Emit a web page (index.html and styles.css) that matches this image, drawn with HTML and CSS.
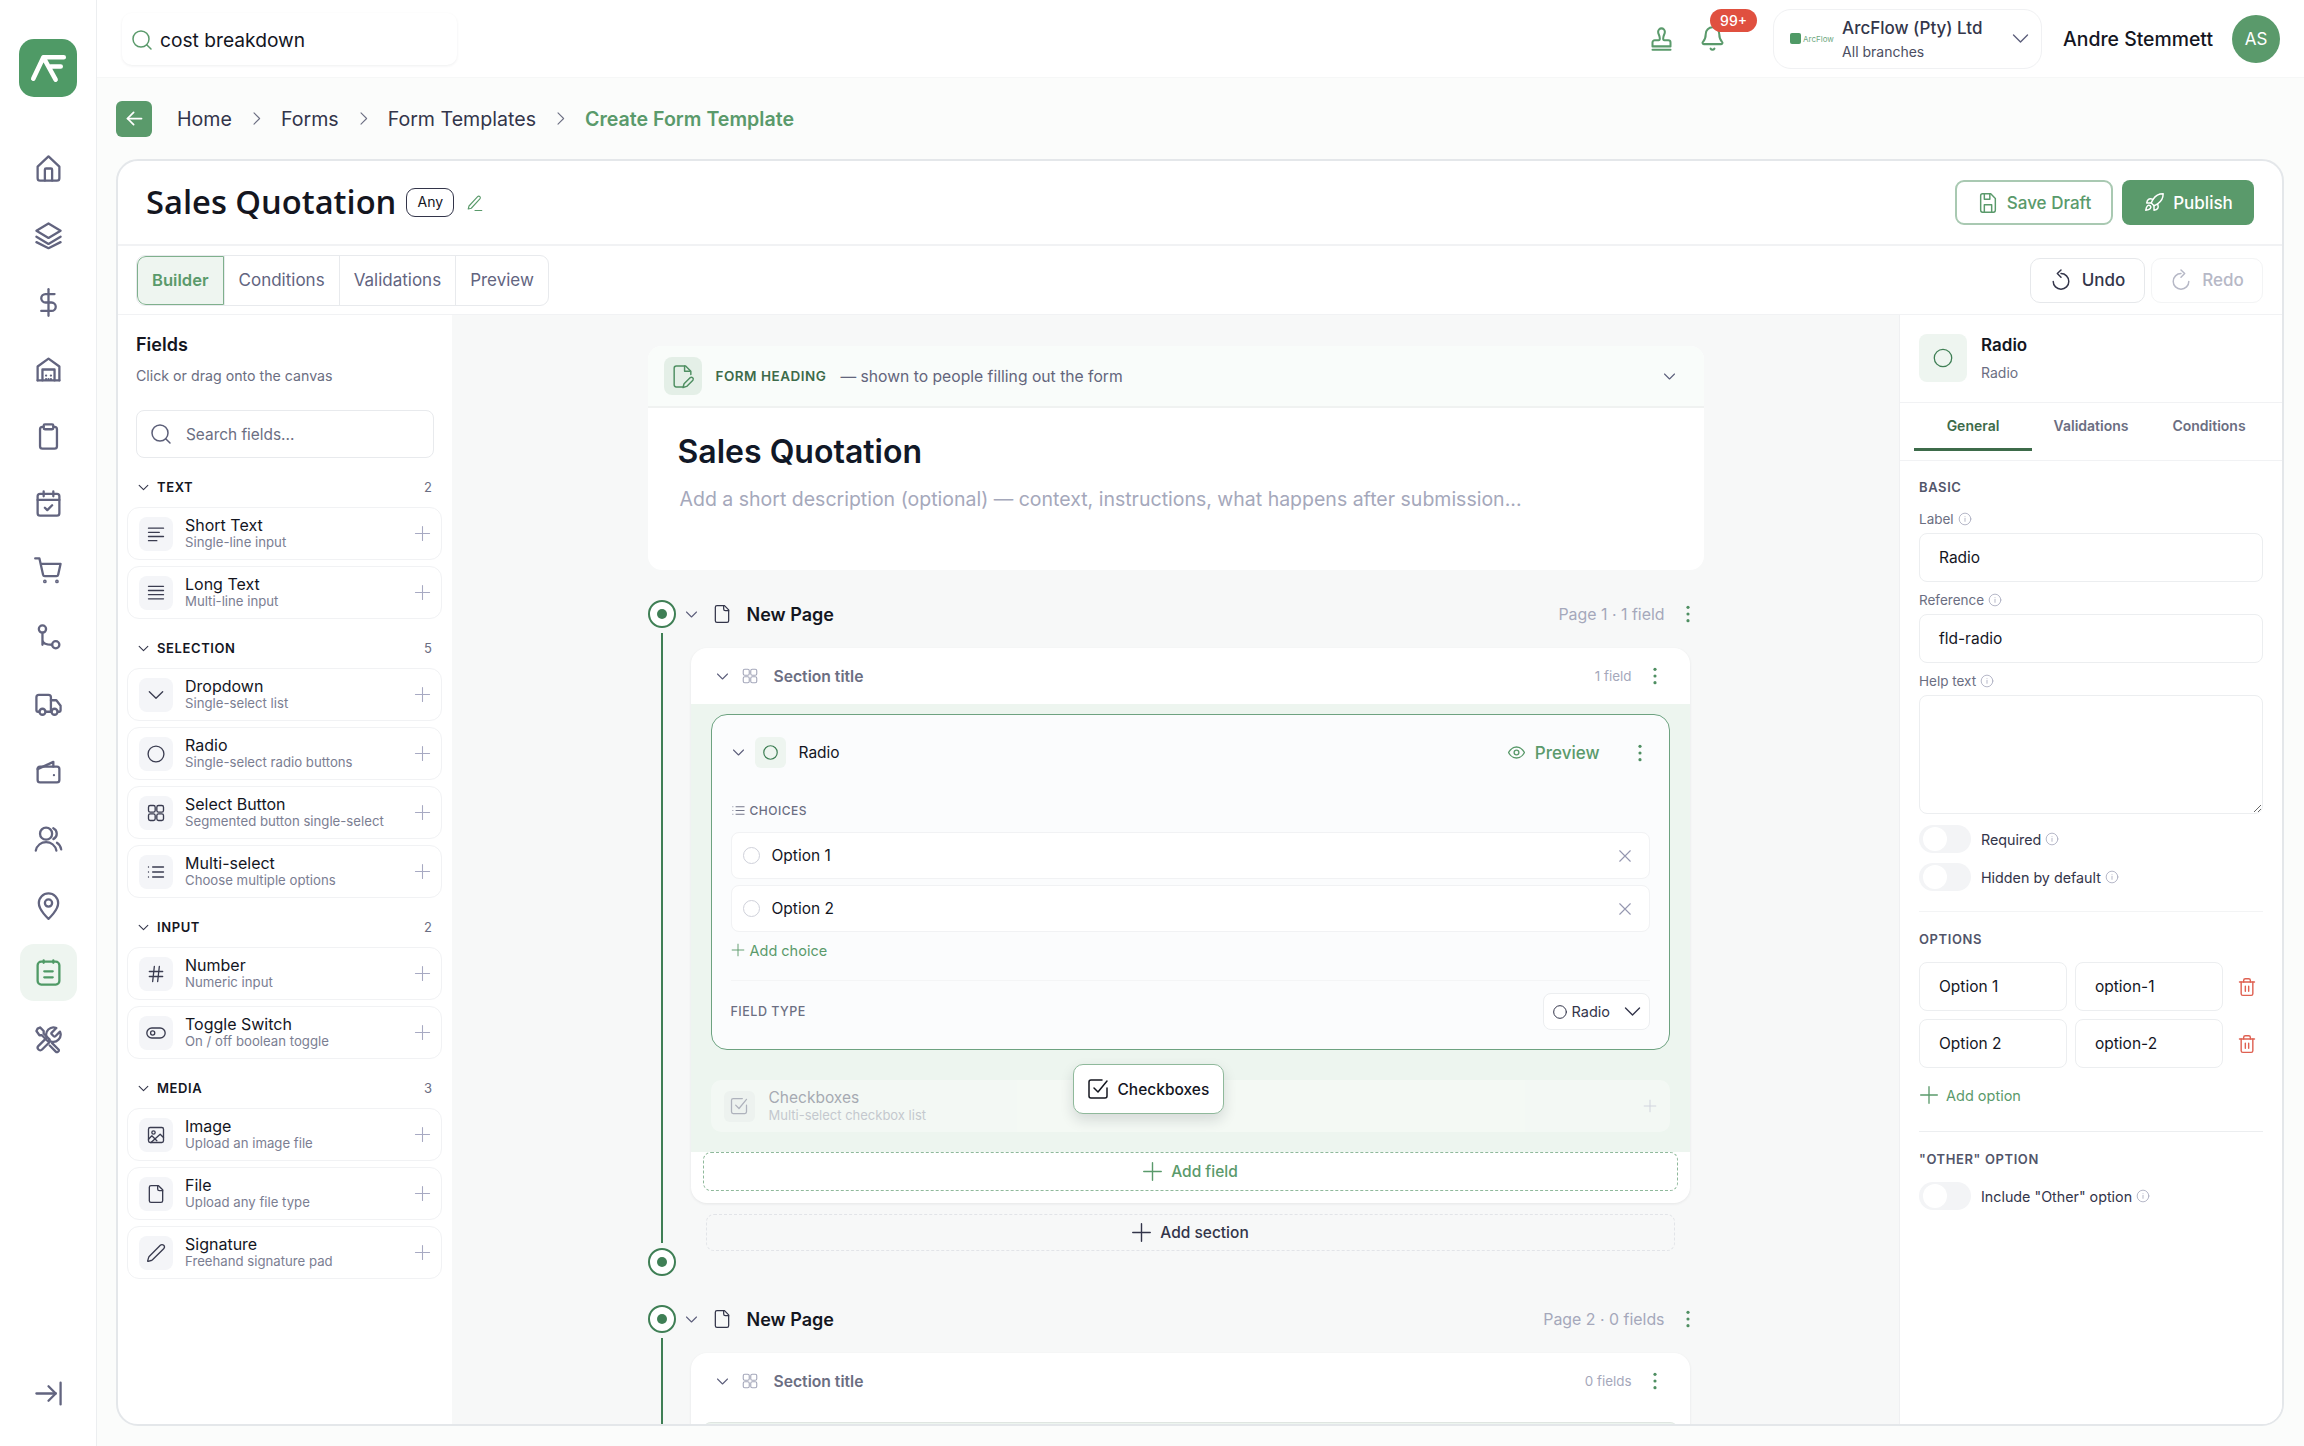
FILE: index.html
```html
<!DOCTYPE html>
<html lang="en">
<head>
    <meta charset="UTF-8">
    <meta name="viewport" content="width=device-width, initial-scale=1.0">
    <title>Create Form Template</title>
    <link rel="stylesheet" href="styles.css">
</head>
<body>
    <!-- Icon sprite -->
    <svg class="sprite" xmlns="http://www.w3.org/2000/svg">
        <symbol id="i-search" viewBox="0 0 24 24"><circle cx="11" cy="11" r="8"/><path d="m21 21-4.3-4.3"/></symbol>
        <symbol id="i-home" viewBox="0 0 24 24"><path d="M3 10.5 12 2l9 8.5V20a2 2 0 0 1-2 2H5a2 2 0 0 1-2-2z"/><path d="M9 22v-9a1 1 0 0 1 1-1h4a1 1 0 0 1 1 1v9"/></symbol>
        <symbol id="i-layers" viewBox="0 0 24 24"><path d="M12 2 2 8l10 6 10-6z"/><path d="m2 13 10 6 10-6"/><path d="m2 17.500 10 5 10-5"/></symbol>
        <symbol id="i-dollar" viewBox="0 0 24 24"><path d="M12 1v22"/><path d="M17 5H9.500a3.500 3.500 0 0 0 0 7h5a3.500 3.500 0 0 1 0 7H6"/></symbol>
        <symbol id="i-warehouse" viewBox="0 0 24 24"><path d="M3 21V9.500L12 3l9 6.500V21"/><path d="M3 21h18"/><path d="M7 21v-9h10v9"/><path d="M10 17h.01M14 17h.01M12 20h.01M10 20h.01M14 20h.01"/></symbol>
        <symbol id="i-clipboard" viewBox="0 0 24 24"><rect x="8" y="2" width="8" height="4" rx="1"/><path d="M8 4H7a2 2 0 0 0-2 2v14a2 2 0 0 0 2 2h10a2 2 0 0 0 2-2V6a2 2 0 0 0-2-2h-1"/></symbol>
        <symbol id="i-calendar" viewBox="0 0 24 24"><rect x="3" y="4" width="18" height="18" rx="2"/><path d="M8 2v4M16 2v4M3 9h18"/><path d="m9 15.500 2 2 4-4"/></symbol>
        <symbol id="i-cart" viewBox="0 0 24 24"><circle cx="9" cy="21" r=".6"/><circle cx="19" cy="21" r=".6"/><path d="M1 2h3.500l3 13.500a1.500 1.500 0 0 0 1.500 1.200h9.500a1.500 1.500 0 0 0 1.500-1.200L22 6.500H5.500"/></symbol>
        <symbol id="i-route" viewBox="0 0 24 24"><circle cx="7" cy="5" r="3"/><circle cx="18" cy="18" r="3"/><path d="M7 8v10M7 14c0 3 3 4 8 4"/></symbol>
        <symbol id="i-truck" viewBox="0 0 24 24"><path d="M14 18V6a2 2 0 0 0-2-2H4a2 2 0 0 0-2 2v11a1 1 0 0 0 1 1h1.500"/><path d="M14.500 18h-5"/><path d="M19.500 18H21a1 1 0 0 0 1-1v-4l-3.500-4.500H14"/><circle cx="7" cy="18" r="2.500"/><circle cx="17" cy="18" r="2.500"/></symbol>
        <symbol id="i-wallet" viewBox="0 0 24 24"><path d="M5 8h14a2 2 0 0 1 2 2v9a2 2 0 0 1-2 2H5a2 2 0 0 1-2-2V10a2 2 0 0 1 2-2"/><path d="M3 10 16 4v4"/><path d="M16.500 15h.01"/></symbol>
        <symbol id="i-users" viewBox="0 0 24 24"><circle cx="10" cy="8" r="5"/><path d="M1.500 22c1-4.500 4.500-7 8.500-7s7.500 2.500 8.500 7"/><path d="M16 3.500a5 5 0 0 1 0 9"/><path d="M19 15.500c1.800 1 3 3 3.500 5.500"/></symbol>
        <symbol id="i-pin" viewBox="0 0 24 24"><path d="M20 10c0 6-8 13-8 13s-8-7-8-13a8 8 0 0 1 16 0"/><circle cx="12" cy="10" r="3"/></symbol>
        <symbol id="i-form" viewBox="0 0 24 24"><rect x="3" y="3" width="18" height="19" rx="3"/><path d="M8 2v2M16 2v2M8.500 11h7M8.500 16h7"/></symbol>
        <symbol id="i-tools" viewBox="0 0 24 24"><path d="M14.700 6.300a1 1 0 0 0 0 1.400l1.600 1.600a1 1 0 0 0 1.400 0l3.800-3.800a6 6 0 0 1-7.900 7.900l-6.900 6.900a2.100 2.100 0 0 1-3-3l6.900-6.900a6 6 0 0 1 7.900-7.900z"/><path d="m3 3 2-1 3 3v2l5 5-1.500 1.500-5-5H4.500L2 5z"/><path d="m15 15 5.500 5.500a1.500 1.500 0 0 1-2.500 1.500L13 17"/></symbol>
        <symbol id="i-collapse" viewBox="0 0 24 24"><path d="M2 12h16"/><path d="m12 6 6 6-6 6"/><path d="M22 3v18"/></symbol>
        <symbol id="i-stamp" viewBox="0 0 24 24"><path d="M4 22h16"/><path d="M4 15.500a2 2 0 0 1 2-2h3.500c.8 0 1-.6 1-1.500 0-3-1.500-3.500-1.500-6a3 3 0 0 1 6 0c0 2.500-1.500 3-1.500 6 0 .9.200 1.500 1 1.500H18a2 2 0 0 1 2 2V19H4z"/></symbol>
        <symbol id="i-bell" viewBox="0 0 24 24"><path d="M10.300 21a2 2 0 0 0 3.400 0"/><path d="M3.300 15.300c-.3.300-.3 1.700 1 1.700h15.400c1.300 0 1.300-1.400 1-1.700C19.400 13.900 18 12.500 18 8A6 6 0 0 0 6 8c0 4.500-1.400 5.900-2.700 7.300"/></symbol>
        <symbol id="i-chevron-down" viewBox="0 0 24 24"><path d="m4 8 8 8 8-8"/></symbol>
        <symbol id="i-chevron-right" viewBox="0 0 24 24"><path d="m8 3 9 9-9 9"/></symbol>
        <symbol id="i-arrow-left" viewBox="0 0 24 24"><path d="M20 12H4"/><path d="m11 5-7 7 7 7"/></symbol>
        <symbol id="i-pencil" viewBox="0 0 24 24"><path d="M4 16 15.500 3.500a2 2 0 0 1 3 3L7 19l-4 1z"/><path d="M12 22h9"/></symbol>
        <symbol id="i-save" viewBox="0 0 24 24"><path d="M15 2H6a2 2 0 0 0-2 2v16a2 2 0 0 0 2 2h12a2 2 0 0 0 2-2V7z"/><path d="M8 2v6h6V2"/><path d="M8 22v-8h8v8"/></symbol>
        <symbol id="i-rocket" viewBox="0 0 24 24"><path d="M5 15c-1.500 1.300-2 5-2 5s3.700-.5 5-2c.7-.8.700-2.100-.1-2.900a2.200 2.200 0 0 0-2.900-.1"/><path d="m12 15-3-3a22 22 0 0 1 2-4A13 13 0 0 1 22 2c0 2.700-.8 7.500-6 11a22 22 0 0 1-4 2"/><path d="M9 12H4s.5-3 2-4c1.600-1.100 5 0 5 0M12 15v5s3-.5 4-2c1.100-1.600 0-5 0-5"/></symbol>
        <symbol id="i-undo" viewBox="0 0 24 24"><path d="M12 5a8.500 8.500 0 1 1-8.500 8.500"/><path d="M12 1 8 5l4 4"/></symbol>
        <symbol id="i-redo" viewBox="0 0 24 24"><path d="M12 5a8.500 8.500 0 1 0 8.500 8.500"/><path d="m12 1 4 4-4 4"/></symbol>
        <symbol id="i-plus" viewBox="0 0 24 24"><path d="M12 2v20M2 12h20"/></symbol>
        <symbol id="i-x" viewBox="0 0 24 24"><path d="M19 5 5 19M5 5l14 14"/></symbol>
        <symbol id="i-dots" viewBox="0 0 24 24"><circle cx="12" cy="4" r="1.900"/><circle cx="12" cy="12" r="1.900"/><circle cx="12" cy="20" r="1.900"/></symbol>
        <symbol id="i-circle" viewBox="0 0 24 24"><circle cx="12" cy="12" r="9.500"/></symbol>
        <symbol id="i-align" viewBox="0 0 24 24"><path d="M3 5h18M3 10h13M3 15h18M3 20h10"/></symbol>
        <symbol id="i-lines" viewBox="0 0 24 24"><path d="M3 4h18M3 9h18M3 14h18M3 19h18"/></symbol>
        <symbol id="i-grid" viewBox="0 0 24 24"><rect x="3" y="3" width="8" height="8" rx="2"/><rect x="13" y="3" width="8" height="8" rx="2"/><rect x="3" y="13" width="8" height="8" rx="2"/><rect x="13" y="13" width="8" height="8" rx="2"/></symbol>
        <symbol id="i-list" viewBox="0 0 24 24"><path d="M8 6h13M8 12h13M8 18h13M3 6h.01M3 12h.01M3 18h.01"/></symbol>
        <symbol id="i-hash" viewBox="0 0 24 24"><path d="M4 9h16M4 15h16M10 3 8 21M16 3l-2 18"/></symbol>
        <symbol id="i-toggle" viewBox="0 0 24 24"><rect x="1" y="6" width="22" height="12" rx="6"/><circle cx="8" cy="12" r="2.500"/></symbol>
        <symbol id="i-image" viewBox="0 0 24 24"><rect x="3" y="3" width="18" height="18" rx="2"/><circle cx="9" cy="9" r="2"/><path d="m21 15-4-4L6 21"/><path d="m3 17 4-4 6 6"/></symbol>
        <symbol id="i-file" viewBox="0 0 24 24"><path d="M15 2H6a2 2 0 0 0-2 2v16a2 2 0 0 0 2 2h12a2 2 0 0 0 2-2V7z"/><path d="M14 2v4a2 2 0 0 0 2 2h4"/></symbol>
        <symbol id="i-pen" viewBox="0 0 24 24"><path d="M21.200 6.800a2.800 2.800 0 0 0-4-4L3.800 16.200a2 2 0 0 0-.5.8l-1.300 4.400a.5.500 0 0 0 .6.600l4.400-1.300a2 2 0 0 0 .8-.5z"/></symbol>
        <symbol id="i-file-pen" viewBox="0 0 24 24"><path d="M12 22H6a2 2 0 0 1-2-2V4a2 2 0 0 1 2-2h9l5 5v3"/><path d="M14 2v5h5"/><path d="M19.500 13a1.800 1.800 0 0 1 2.500 2.500L16 21.500l-3.500 1 1-3.500z"/></symbol>
        <symbol id="i-eye" viewBox="0 0 24 24"><path d="M2 12s3.500-7 10-7 10 7 10 7-3.500 7-10 7-10-7-10-7"/><circle cx="12" cy="12" r="3"/></symbol>
        <symbol id="i-check" viewBox="0 0 24 24"><path d="M21 11v8a2 2 0 0 1-2 2H5a2 2 0 0 1-2-2V5a2 2 0 0 1 2-2h11"/><path d="m8 11 4 4 9-11"/></symbol>
        <symbol id="i-info" viewBox="0 0 24 24"><circle cx="12" cy="12" r="10"/><path d="M12 16v-5M12 8h.01"/></symbol>
        <symbol id="i-trash" viewBox="0 0 24 24"><path d="M3 6h18"/><path d="M19 6v14a2 2 0 0 1-2 2H7a2 2 0 0 1-2-2V6"/><path d="M8 6V4a2 2 0 0 1 2-2h4a2 2 0 0 1 2 2v2"/><path d="M10 11v6M14 11v6"/></symbol>
    </svg>

    <div class="app">
        <!-- Sidebar -->
        <aside class="sidebar">
            <div class="logo">
                <svg viewBox="0 0 57 57"><path d="M14 39 24 18h20M24 18l12 22M31 27h10"/></svg>
            </div>
            <nav class="nav">
                <a class="nav-item"><svg class="icon"><use href="#i-home"/></svg></a>
                <a class="nav-item"><svg class="icon"><use href="#i-layers"/></svg></a>
                <a class="nav-item"><svg class="icon"><use href="#i-dollar"/></svg></a>
                <a class="nav-item"><svg class="icon"><use href="#i-warehouse"/></svg></a>
                <a class="nav-item"><svg class="icon"><use href="#i-clipboard"/></svg></a>
                <a class="nav-item"><svg class="icon"><use href="#i-calendar"/></svg></a>
                <a class="nav-item"><svg class="icon"><use href="#i-cart"/></svg></a>
                <a class="nav-item"><svg class="icon"><use href="#i-route"/></svg></a>
                <a class="nav-item"><svg class="icon"><use href="#i-truck"/></svg></a>
                <a class="nav-item"><svg class="icon"><use href="#i-wallet"/></svg></a>
                <a class="nav-item"><svg class="icon"><use href="#i-users"/></svg></a>
                <a class="nav-item"><svg class="icon"><use href="#i-pin"/></svg></a>
                <a class="nav-item active"><svg class="icon"><use href="#i-form"/></svg></a>
                <a class="nav-item"><svg class="icon"><use href="#i-tools"/></svg></a>
            </nav>
            <a class="nav-item collapse"><svg class="icon"><use href="#i-collapse"/></svg></a>
        </aside>

        <main class="main">
            <!-- Top bar -->
            <header class="topbar">
                <div class="top-search">
                    <svg class="icon"><use href="#i-search"/></svg>
                    <span>cost breakdown</span>
                </div>
                <div class="top-right">
                    <svg class="icon stamp"><use href="#i-stamp"/></svg>
                    <div class="bell">
                        <svg class="icon"><use href="#i-bell"/></svg>
                        <span class="badge">99+</span>
                    </div>
                    <div class="company">
                        <div class="company-logo">
                            <span class="company-mark"></span>
                            <span class="company-word">ArcFlow</span>
                        </div>
                        <div class="company-text">
                            <strong>ArcFlow (Pty) Ltd</strong>
                            <span>All branches</span>
                        </div>
                        <svg class="icon"><use href="#i-chevron-down"/></svg>
                    </div>
                    <span class="user-name">Andre Stemmett</span>
                    <span class="avatar">AS</span>
                </div>
            </header>

            <!-- Breadcrumb -->
            <div class="crumbs">
                <a class="back"><svg class="icon"><use href="#i-arrow-left"/></svg></a>
                <a>Home</a>
                <svg class="icon"><use href="#i-chevron-right"/></svg>
                <a>Forms</a>
                <svg class="icon"><use href="#i-chevron-right"/></svg>
                <a>Form Templates</a>
                <svg class="icon"><use href="#i-chevron-right"/></svg>
                <a class="current">Create Form Template</a>
            </div>

            <div class="card">
                <div class="card-head">
                    <h1>Sales Quotation</h1>
                    <span class="chip">Any</span>
                    <svg class="icon edit"><use href="#i-pencil"/></svg>
                    <div class="head-actions">
                        <button class="btn-draft"><svg class="icon"><use href="#i-save"/></svg>Save Draft</button>
                        <button class="btn-publish"><svg class="icon"><use href="#i-rocket"/></svg>Publish</button>
                    </div>
                </div>

                <div class="toolbar">
                    <div class="tabs">
                        <a class="tab active">Builder</a>
                        <a class="tab">Conditions</a>
                        <a class="tab">Validations</a>
                        <a class="tab">Preview</a>
                    </div>
                    <div class="history">
                        <button class="btn-undo"><svg class="icon"><use href="#i-undo"/></svg>Undo</button>
                        <button class="btn-redo"><svg class="icon"><use href="#i-redo"/></svg>Redo</button>
                    </div>
                </div>

                <div class="builder">
                    <!-- Field palette -->
                    <section class="palette">
                        <div class="palette-head">
                            <h2>Fields</h2>
                            <p>Click or drag onto the canvas</p>
                        </div>
                        <div class="palette-search">
                            <svg class="icon"><use href="#i-search"/></svg>
                            <span>Search fields...</span>
                        </div>

                        <div class="group">
                            <div class="group-head">
                                <svg class="icon"><use href="#i-chevron-down"/></svg>
                                <span class="group-name">TEXT</span>
                                <span class="group-count">2</span>
                            </div>
                            <div class="item">
                                <span class="item-icon"><svg class="icon"><use href="#i-align"/></svg></span>
                                <div class="item-text"><strong>Short Text</strong><span>Single-line input</span></div>
                                <svg class="icon item-add"><use href="#i-plus"/></svg>
                            </div>
                            <div class="item">
                                <span class="item-icon"><svg class="icon"><use href="#i-lines"/></svg></span>
                                <div class="item-text"><strong>Long Text</strong><span>Multi-line input</span></div>
                                <svg class="icon item-add"><use href="#i-plus"/></svg>
                            </div>
                        </div>

                        <div class="group">
                            <div class="group-head">
                                <svg class="icon"><use href="#i-chevron-down"/></svg>
                                <span class="group-name">SELECTION</span>
                                <span class="group-count">5</span>
                            </div>
                            <div class="item">
                                <span class="item-icon"><svg class="icon"><use href="#i-chevron-down"/></svg></span>
                                <div class="item-text"><strong>Dropdown</strong><span>Single-select list</span></div>
                                <svg class="icon item-add"><use href="#i-plus"/></svg>
                            </div>
                            <div class="item">
                                <span class="item-icon"><svg class="icon"><use href="#i-circle"/></svg></span>
                                <div class="item-text"><strong>Radio</strong><span>Single-select radio buttons</span></div>
                                <svg class="icon item-add"><use href="#i-plus"/></svg>
                            </div>
                            <div class="item">
                                <span class="item-icon"><svg class="icon"><use href="#i-grid"/></svg></span>
                                <div class="item-text"><strong>Select Button</strong><span>Segmented button single-select</span></div>
                                <svg class="icon item-add"><use href="#i-plus"/></svg>
                            </div>
                            <div class="item">
                                <span class="item-icon"><svg class="icon"><use href="#i-list"/></svg></span>
                                <div class="item-text"><strong>Multi-select</strong><span>Choose multiple options</span></div>
                                <svg class="icon item-add"><use href="#i-plus"/></svg>
                            </div>
                        </div>

                        <div class="group">
                            <div class="group-head">
                                <svg class="icon"><use href="#i-chevron-down"/></svg>
                                <span class="group-name">INPUT</span>
                                <span class="group-count">2</span>
                            </div>
                            <div class="item">
                                <span class="item-icon"><svg class="icon"><use href="#i-hash"/></svg></span>
                                <div class="item-text"><strong>Number</strong><span>Numeric input</span></div>
                                <svg class="icon item-add"><use href="#i-plus"/></svg>
                            </div>
                            <div class="item">
                                <span class="item-icon"><svg class="icon"><use href="#i-toggle"/></svg></span>
                                <div class="item-text"><strong>Toggle Switch</strong><span>On / off boolean toggle</span></div>
                                <svg class="icon item-add"><use href="#i-plus"/></svg>
                            </div>
                        </div>

                        <div class="group">
                            <div class="group-head">
                                <svg class="icon"><use href="#i-chevron-down"/></svg>
                                <span class="group-name">MEDIA</span>
                                <span class="group-count">3</span>
                            </div>
                            <div class="item">
                                <span class="item-icon"><svg class="icon"><use href="#i-image"/></svg></span>
                                <div class="item-text"><strong>Image</strong><span>Upload an image file</span></div>
                                <svg class="icon item-add"><use href="#i-plus"/></svg>
                            </div>
                            <div class="item">
                                <span class="item-icon"><svg class="icon"><use href="#i-file"/></svg></span>
                                <div class="item-text"><strong>File</strong><span>Upload any file type</span></div>
                                <svg class="icon item-add"><use href="#i-plus"/></svg>
                            </div>
                            <div class="item">
                                <span class="item-icon"><svg class="icon"><use href="#i-pen"/></svg></span>
                                <div class="item-text"><strong>Signature</strong><span>Freehand signature pad</span></div>
                                <svg class="icon item-add"><use href="#i-plus"/></svg>
                            </div>
                        </div>
                    </section>

                    <!-- Canvas -->
                    <section class="canvas">
                        <div class="canvas-inner">
                            <div class="heading-card">
                                <div class="heading-bar">
                                    <span class="heading-icon"><svg class="icon"><use href="#i-file-pen"/></svg></span>
                                    <span class="heading-label">FORM HEADING</span>
                                    <span class="heading-note">— shown to people filling out the form</span>
                                    <svg class="icon"><use href="#i-chevron-down"/></svg>
                                </div>
                                <h2>Sales Quotation</h2>
                                <p>Add a short description (optional) — context, instructions, what happens after submission...</p>
                            </div>

                            <div class="page">
                                <div class="rail">
                                    <span class="rail-dot"></span>
                                    <span class="rail-line"></span>
                                    <span class="rail-dot"></span>
                                </div>
                                <div class="page-main">
                                    <div class="page-head">
                                        <svg class="icon chev"><use href="#i-chevron-down"/></svg>
                                        <svg class="icon file"><use href="#i-file"/></svg>
                                        <strong>New Page</strong>
                                        <span class="page-count">Page 1 · 1 field</span>
                                        <svg class="icon dots"><use href="#i-dots"/></svg>
                                    </div>

                                    <div class="section">
                                        <div class="section-head">
                                            <svg class="icon chev"><use href="#i-chevron-down"/></svg>
                                            <svg class="icon grid"><use href="#i-grid"/></svg>
                                            <span class="section-title">Section title</span>
                                            <span class="section-count">1 field</span>
                                            <svg class="icon dots"><use href="#i-dots"/></svg>
                                        </div>
                                        <div class="section-body">
                                            <div class="field-card">
                                                <div class="field-head">
                                                    <svg class="icon chev"><use href="#i-chevron-down"/></svg>
                                                    <span class="field-icon"><svg class="icon"><use href="#i-circle"/></svg></span>
                                                    <span class="field-name">Radio</span>
                                                    <a class="preview"><svg class="icon"><use href="#i-eye"/></svg>Preview</a>
                                                    <svg class="icon dots"><use href="#i-dots"/></svg>
                                                </div>
                                                <div class="choices-label"><svg class="icon"><use href="#i-list"/></svg>CHOICES</div>
                                                <div class="choice"><span class="choice-radio"></span><span>Option 1</span><svg class="icon"><use href="#i-x"/></svg></div>
                                                <div class="choice"><span class="choice-radio"></span><span>Option 2</span><svg class="icon"><use href="#i-x"/></svg></div>
                                                <a class="add-choice"><svg class="icon"><use href="#i-plus"/></svg>Add choice</a>
                                                <div class="field-type">
                                                    <span class="field-type-label">FIELD TYPE</span>
                                                    <div class="type-select">
                                                        <svg class="icon radio"><use href="#i-circle"/></svg>
                                                        <span>Radio</span>
                                                        <svg class="icon chev"><use href="#i-chevron-down"/></svg>
                                                    </div>
                                                </div>
                                            </div>

                                            <div class="ghost">
                                                <span class="ghost-icon"><svg class="icon"><use href="#i-check"/></svg></span>
                                                <div class="ghost-text"><strong>Checkboxes</strong><span>Multi-select checkbox list</span></div>
                                                <svg class="icon ghost-add"><use href="#i-plus"/></svg>
                                            </div>
                                            <div class="drag-chip"><svg class="icon"><use href="#i-check"/></svg>Checkboxes</div>
                                        </div>
                                        <a class="add-field"><svg class="icon"><use href="#i-plus"/></svg>Add field</a>
                                    </div>
                                    <a class="add-section"><svg class="icon"><use href="#i-plus"/></svg>Add section</a>
                                </div>
                            </div>

                            <div class="page second">
                                <div class="rail">
                                    <span class="rail-dot"></span>
                                    <span class="rail-line"></span>
                                </div>
                                <div class="page-main">
                                    <div class="page-head">
                                        <svg class="icon chev"><use href="#i-chevron-down"/></svg>
                                        <svg class="icon file"><use href="#i-file"/></svg>
                                        <strong>New Page</strong>
                                        <span class="page-count">Page 2 · 0 fields</span>
                                        <svg class="icon dots"><use href="#i-dots"/></svg>
                                    </div>
                                    <div class="section">
                                        <div class="section-head">
                                            <svg class="icon chev"><use href="#i-chevron-down"/></svg>
                                            <svg class="icon grid"><use href="#i-grid"/></svg>
                                            <span class="section-title">Section title</span>
                                            <span class="section-count">0 fields</span>
                                            <svg class="icon dots"><use href="#i-dots"/></svg>
                                        </div>
                                        <div class="section-drop"></div>
                                    </div>
                                </div>
                            </div>
                        </div>
                    </section>

                    <!-- Properties -->
                    <section class="props">
                        <div class="props-head">
                            <span class="props-icon"><svg class="icon"><use href="#i-circle"/></svg></span>
                            <div class="props-title"><strong>Radio</strong><span>Radio</span></div>
                        </div>
                        <div class="props-tabs">
                            <a class="props-tab active">General</a>
                            <a class="props-tab">Validations</a>
                            <a class="props-tab">Conditions</a>
                        </div>
                        <div class="props-form">
                            <h3>BASIC</h3>
                            <label class="prop-label">Label <svg class="icon"><use href="#i-info"/></svg></label>
                            <div class="prop-input">Radio</div>
                            <label class="prop-label">Reference <svg class="icon"><use href="#i-info"/></svg></label>
                            <div class="prop-input">fld-radio</div>
                            <label class="prop-label">Help text <svg class="icon"><use href="#i-info"/></svg></label>
                            <textarea class="prop-area"></textarea>
                            <div class="switch-row first"><span class="switch"></span>Required <svg class="icon"><use href="#i-info"/></svg></div>
                            <div class="switch-row"><span class="switch"></span>Hidden by default <svg class="icon"><use href="#i-info"/></svg></div>
                            <hr>
                            <h3>OPTIONS</h3>
                            <div class="option-row">
                                <div class="prop-input">Option 1</div>
                                <div class="prop-input">option-1</div>
                                <svg class="icon"><use href="#i-trash"/></svg>
                            </div>
                            <div class="option-row">
                                <div class="prop-input">Option 2</div>
                                <div class="prop-input">option-2</div>
                                <svg class="icon"><use href="#i-trash"/></svg>
                            </div>
                            <a class="add-option"><svg class="icon"><use href="#i-plus"/></svg>Add option</a>
                            <hr class="wide">
                            <h3>"OTHER" OPTION</h3>
                            <div class="switch-row other"><span class="switch"></span>Include "Other" option <svg class="icon"><use href="#i-info"/></svg></div>
                        </div>
                    </section>
                </div>
            </div>
        </main>
    </div>
</body>
</html>
```

FILE: styles.css
```css
* {
    box-sizing: border-box;
}

body {
    margin: 0;
    font-family: "Inter", "Liberation Sans", sans-serif;
    color: #14161f;
    background-color: #fbfcfb;
}

.sprite {
    display: none;
}

.icon {
    flex: none;
    fill: none;
    stroke: currentColor;
    stroke-width: 2;
    stroke-linecap: round;
    stroke-linejoin: round;
}

strong {
    font-weight: 500;
}

.app {
    display: flex;
    width: 2304px;
    height: 1446px;
    overflow: hidden;
}

/* Sidebar */
.sidebar {
    flex: none;
    width: 97px;
    display: flex;
    flex-direction: column;
    align-items: center;
    padding: 39px 0 24px;
    background-color: #fff;
    border-right: 1px solid #eceef0;
}

.logo {
    width: 58px;
    height: 58px;
    border-radius: 15px;
    background-color: #4f9a66;
}

.logo svg {
    display: block;
    width: 58px;
    height: 58px;
    fill: none;
    stroke: #fff;
    stroke-width: 4.5;
    stroke-linecap: round;
    stroke-linejoin: round;
}

.nav {
    display: flex;
    flex-direction: column;
    gap: 10px;
    margin-top: 43px;
}

.nav-item {
    display: flex;
    align-items: center;
    justify-content: center;
    width: 57px;
    height: 57px;
    border-radius: 14px;
    color: #62647f;
}

.nav-item .icon {
    width: 29px;
    height: 29px;
    stroke-width: 1.9;
}

.nav-item.active {
    background-color: #eef5f0;
    color: #4f9a66;
}

.collapse {
    margin-top: auto;
}

/* Main column */
.main {
    flex: 1;
    min-width: 0;
    display: flex;
    flex-direction: column;
}

.topbar {
    flex: none;
    height: 78px;
    display: flex;
    align-items: center;
    padding: 0 24px 0 25px;
    background-color: #fff;
    border-bottom: 1px solid #f6f7f7;
}

.top-search {
    display: flex;
    align-items: center;
    gap: 6px;
    width: 335px;
    height: 52px;
    padding: 2px 8px 0;
    border-radius: 10px;
    box-shadow: 0 1px 3px rgba(20, 30, 40, 0.07);
    font-size: 19.2px;
}

.top-search .icon {
    width: 24px;
    height: 24px;
    color: #5a9a6b;
    stroke-width: 1.5;
}

.top-right {
    margin-left: auto;
    display: flex;
    align-items: center;
}

.stamp {
    width: 27px;
    height: 27px;
    color: #5a9a6b;
    stroke-width: 1.8;
}

.bell {
    position: relative;
    width: 27px;
    height: 27px;
    margin-left: 24px;
    color: #5a9a6b;
}

.bell .icon {
    width: 27px;
    height: 27px;
    stroke-width: 1.8;
}

.badge {
    position: absolute;
    left: 11px;
    top: -16px;
    width: 47px;
    height: 23px;
    border-radius: 12px;
    background-color: #e0503f;
    color: #fff;
    font-size: 14px;
    line-height: 23px;
    text-align: center;
    font-weight: 500;
}

.company {
    display: flex;
    align-items: center;
    width: 269px;
    height: 60px;
    margin-left: 47px;
    padding: 0 10px 0 16px;
    border: 1px solid #f0f1f3;
    border-radius: 18px;
}

.company-logo {
    display: flex;
    align-items: center;
    gap: 2px;
    width: 52px;
}

.company-mark {
    width: 11px;
    height: 11px;
    border-radius: 2px;
    background-color: #4f9a66;
}

.company-word {
    font-size: 8px;
    color: #6fa87f;
}

.company-text {
    display: flex;
    flex-direction: column;
    gap: 5px;
}

.company-text strong {
    font-size: 17px;
    line-height: 20px;
    color: #33364a;
}

.company-text span {
    font-size: 14px;
    line-height: 17px;
    color: #4b4e62;
}

.company .icon {
    width: 21px;
    height: 21px;
    margin-left: auto;
    color: #5d5f7c;
    stroke-width: 1.6;
}

.user-name {
    margin-left: 21px;
    font-size: 19.4px;
    font-weight: 500;
}

.avatar {
    width: 48px;
    height: 48px;
    margin-left: 19px;
    border-radius: 50%;
    background-color: #5a9a6b;
    color: #fff;
    font-size: 17px;
    line-height: 48px;
    text-align: center;
}

/* Breadcrumb */
.crumbs {
    flex: none;
    height: 81px;
    display: flex;
    align-items: center;
    gap: 17px;
    padding: 0 19px;
    font-size: 19.6px;
    color: #33354a;
}

.crumbs .icon {
    width: 15px;
    height: 15px;
    color: #6b6e82;
    stroke-width: 1.7;
}

.back {
    display: flex;
    align-items: center;
    justify-content: center;
    width: 36px;
    height: 36px;
    margin-right: 8px;
    border-radius: 6px;
    background-color: #5a9a6b;
}

.crumbs .back .icon {
    width: 21px;
    height: 21px;
    color: #fff;
    stroke-width: 2;
}

.current {
    color: #5a9a6b;
    font-weight: 600;
}

/* Main card */
.card {
    flex: 1;
    min-height: 0;
    display: flex;
    flex-direction: column;
    margin: 0 20px 20px 19px;
    background-color: #fff;
    border: 2px solid #e4e7ea;
    border-radius: 22px;
    overflow: hidden;
}

.card-head {
    flex: none;
    height: 85px;
    display: flex;
    align-items: center;
    padding: 0 28px;
    border-bottom: 2px solid #f1f2f4;
}

.card-head h1 {
    margin: 0 0 2px;
    font-family: "Open Sans", "Liberation Sans", sans-serif;
    font-size: 32.7px;
    font-weight: 600;
}

.chip {
    margin-left: 10px;
    width: 48px;
    height: 29px;
    border: 1.5px solid #33354a;
    border-radius: 9px;
    font-size: 14px;
    line-height: 26px;
    text-align: center;
}

.edit {
    width: 18px;
    height: 18px;
    margin-left: 12px;
    color: #5a9a6b;
    stroke-width: 1.5;
}

.head-actions {
    margin-left: auto;
    display: flex;
    gap: 9px;
}

button {
    display: flex;
    align-items: center;
    justify-content: center;
    font-family: inherit;
    font-size: 17px;
    font-weight: 500;
    height: 45px;
    cursor: pointer;
}

button .icon {
    width: 22px;
    height: 22px;
    stroke-width: 1.6;
}

.btn-draft {
    gap: 8px;
    width: 158px;
    background-color: #fff;
    border: 2px solid #a9c9b2;
    border-radius: 9px;
    color: #5a9a6b;
}

.btn-publish {
    gap: 8px;
    width: 132px;
    background-color: #5a9a6b;
    border: none;
    border-radius: 8px;
    color: #fff;
}

.toolbar {
    flex: none;
    height: 69px;
    display: flex;
    align-items: center;
    justify-content: space-between;
    padding: 0 19px 0 18px;
    border-bottom: 1px solid #f1f2f4;
}

.tabs {
    display: flex;
    height: 51px;
    border: 1px solid #e8eaed;
    border-radius: 9px;
    overflow: hidden;
}

.tab {
    padding: 0 14px;
    font-size: 17px;
    line-height: 49px;
    color: #62647f;
    border-left: 1px solid #e8eaed;
}

.tab:first-child {
    border-left: none;
}

.tab.active {
    background-color: #eef5f0;
    border: 1px solid #7fb08d;
    border-radius: 9px 0 0 9px;
    color: #5a9a6b;
    font-size: 16.6px;
    font-weight: 600;
    line-height: 47px;
}

.history {
    display: flex;
    gap: 6px;
}

.btn-undo,
.btn-redo {
    gap: 10px;
    background-color: #fff;
    border-radius: 10px;
}

.btn-undo {
    width: 115px;
    border: 1px solid #e6e8eb;
    color: #33354a;
}

.btn-redo {
    width: 112px;
    border: 1px solid #f3f4f5;
    color: #b6b8c6;
}

/* Builder columns */
.builder {
    flex: 1;
    min-height: 0;
    display: flex;
}

.palette {
    flex: none;
    width: 334px;
    padding: 1px 10px 0 9px;
}

.palette-head {
    padding: 18px 9px 0;
}

.palette-head h2 {
    margin: 0;
    font-size: 18px;
    line-height: 22px;
    font-weight: 600;
}

.palette-head p {
    margin: 10px 0 0;
    font-size: 14.2px;
    line-height: 20px;
    color: #6b6e82;
}

.palette-search {
    display: flex;
    align-items: center;
    gap: 13px;
    width: 298px;
    height: 48px;
    margin: 24px 0 0 9px;
    padding: 0 12px;
    border: 1px solid #e8eaed;
    border-radius: 8px;
    font-size: 15.4px;
    color: #6b6e82;
}

.palette-search .icon {
    width: 24px;
    height: 24px;
    color: #5b5e78;
    stroke-width: 1.5;
}

.group {
    display: flex;
    flex-direction: column;
    gap: 6px;
    margin-top: 19px;
}

.group-head {
    display: flex;
    align-items: center;
    height: 20px;
    margin-bottom: 4px;
    padding: 0 10px;
}

.group-head .icon {
    width: 13px;
    height: 13px;
    color: #33354a;
    stroke-width: 2;
}

.group-name {
    margin-left: 7px;
    font-size: 13px;
    font-weight: 600;
    letter-spacing: 0.6px;
}

.group-count {
    margin-left: auto;
    font-size: 13px;
    color: #6b6e82;
}

.item {
    display: flex;
    align-items: center;
    height: 53px;
    padding: 0 11px;
    border: 1px solid #f1f2f4;
    border-radius: 12px;
    background-color: #fff;
}

.item-icon {
    flex: none;
    display: flex;
    align-items: center;
    justify-content: center;
    width: 34px;
    height: 34px;
    border-radius: 8px;
    background-color: #f4f5f8;
    color: #3a3c50;
}

.item-icon .icon {
    width: 20px;
    height: 20px;
    stroke-width: 1.6;
}

.item-text {
    display: flex;
    flex-direction: column;
    margin-left: 12px;
    padding-bottom: 2px;
}

.item-text strong {
    font-size: 16px;
    line-height: 18px;
    font-weight: 400;
}

.item-text span {
    font-size: 13.2px;
    line-height: 16px;
    color: #7b7e92;
}

.item-add {
    width: 17px;
    height: 17px;
    margin-left: auto;
    color: #a7a9c2;
    stroke-width: 1.5;
    margin-right: -1px;
}

/* Canvas */
.canvas {
    flex: 1;
    min-width: 0;
    background-color: #f7f8f8;
    overflow: hidden;
}

.canvas-inner {
    width: 1056px;
    margin: 0 auto;
    padding-top: 31px;
}

.heading-card {
    height: 224px;
    background-color: #fff;
    border-radius: 14px;
    overflow: hidden;
}

.heading-bar {
    display: flex;
    align-items: center;
    height: 62px;
    padding: 0 16px;
    background-color: #f9fcfa;
    border-bottom: 2px solid #f0f2f1;
}

.heading-icon {
    display: flex;
    align-items: center;
    justify-content: center;
    width: 38px;
    height: 38px;
    border-radius: 8px;
    background-color: #e4efe7;
    color: #4f8f62;
}

.heading-icon .icon {
    width: 25px;
    height: 25px;
    stroke-width: 1.4;
}

.heading-label {
    margin-left: 14px;
    font-size: 13.5px;
    font-weight: 600;
    letter-spacing: 0.5px;
    color: #3d6b4a;
}

.heading-note {
    margin-left: 14px;
    font-size: 15.7px;
    color: #63657c;
}

.heading-bar > .icon {
    width: 15px;
    height: 15px;
    margin-left: auto;
    margin-right: 11px;
    color: #5d5f7c;
    stroke-width: 1.8;
}

.heading-card h2 {
    margin: 25px 0 0 30px;
    font-size: 32px;
    line-height: 38px;
    font-weight: 600;
    color: #111827;
}

.heading-card p {
    margin: 15px 0 0 32px;
    font-size: 19.5px;
    line-height: 26px;
    color: #a5a8bb;
}

.page {
    display: flex;
    margin-top: 30px;
}

.page.second {
    margin-top: 29px;
}

.rail {
    flex: none;
    width: 28px;
    display: flex;
    flex-direction: column;
    align-items: center;
}

.rail-dot {
    flex: none;
    position: relative;
    width: 28px;
    height: 28px;
    border: 2px solid #3f7f55;
    border-radius: 50%;
    background-color: #fff;
}

.rail-dot::after {
    content: "";
    position: absolute;
    left: 7px;
    top: 7px;
    width: 10px;
    height: 10px;
    border-radius: 50%;
    background-color: #3f7f55;
}

.rail-line {
    flex: 1;
    width: 2px;
    margin: 5px 0;
    background-color: #3f7f55;
}

.page-main {
    flex: 1;
    min-width: 0;
    margin-left: 7px;
    padding-bottom: 25px;
}

.page-head {
    display: flex;
    align-items: center;
    height: 28px;
    padding: 0 6px 0 1px;
}

.chev {
    width: 15px;
    height: 15px;
    color: #5d5f7c;
    stroke-width: 1.7;
}

.page-head .file {
    width: 20px;
    height: 20px;
    margin-left: 13px;
    color: #33354a;
    stroke-width: 1.5;
}

.page-head strong {
    margin-left: 15px;
    font-size: 18px;
    font-weight: 600;
}

.page-count {
    margin-left: auto;
    font-size: 15.9px;
    color: #a5a8bb;
}

.dots {
    width: 20px;
    height: 20px;
    fill: #4f8f62;
    stroke: none;
}

.page-head .dots {
    margin-left: 13px;
}

.section {
    margin: 20px 14px 0 8px;
    background-color: #fff;
    border-radius: 16px;
    box-shadow: 0 1px 3px rgba(20, 30, 40, 0.08);
    overflow: hidden;
}

.section-head {
    display: flex;
    align-items: center;
    height: 56px;
    padding: 0 24px;
}

.section-head .grid {
    width: 18px;
    height: 18px;
    margin-left: 11px;
    color: #a5a8bb;
    stroke-width: 1.5;
}

.section-title {
    margin-left: 15px;
    font-size: 15.7px;
    font-weight: 600;
    color: #6b6e82;
}

.section-count {
    margin-left: auto;
    margin-right: 13px;
    font-size: 13.4px;
    color: #a5a8bb;
}

.section-head .dots {
    margin-right: 1px;
}

.section-body {
    position: relative;
    padding: 10px 20px 20px;
    background-color: #edf5ef;
}

.field-card {
    height: 336px;
    padding: 22px 19px 0;
    background-color: #fbfcfd;
    border: 1px solid #6da280;
    border-radius: 16px;
}

.field-head {
    display: flex;
    align-items: center;
    height: 31px;
}

.field-icon {
    display: flex;
    align-items: center;
    justify-content: center;
    width: 31px;
    height: 31px;
    margin-left: 9px;
    border-radius: 6px;
    background-color: #eef5f0;
    color: #3f7f55;
}

.field-icon .icon {
    width: 17px;
    height: 17px;
    stroke-width: 1.7;
}

.field-name {
    margin-left: 13px;
    font-size: 15.5px;
}

.preview {
    margin-left: auto;
    display: flex;
    align-items: center;
    gap: 9px;
    font-size: 17px;
    font-weight: 500;
    color: #5a9a6b;
}

.preview .icon {
    width: 19px;
    height: 19px;
    stroke-width: 1.7;
}

.field-head .dots {
    margin-left: 30px;
}

.choices-label {
    display: flex;
    align-items: center;
    gap: 4px;
    height: 16px;
    margin-top: 34px;
    font-size: 12px;
    font-weight: 500;
    letter-spacing: 0.5px;
    color: #6b6e82;
}

.choices-label .icon {
    width: 15px;
    height: 15px;
    stroke-width: 1.5;
}

.choice {
    display: flex;
    align-items: center;
    height: 47px;
    margin-top: 6px;
    padding: 0 16px 0 11px;
    background-color: #fff;
    border: 1px solid #f1f2f4;
    border-radius: 8px;
    font-size: 15.5px;
}

.choices-label + .choice {
    margin-top: 14px;
}

.choice-radio {
    width: 17px;
    height: 17px;
    margin-right: 12px;
    border: 1px solid #cfd1da;
    border-radius: 50%;
}

.choice .icon {
    width: 18px;
    height: 18px;
    margin-left: auto;
    margin-right: -1px;
    color: #9597b0;
    stroke-width: 1.5;
}

.add-choice {
    display: flex;
    align-items: center;
    gap: 5px;
    height: 18px;
    margin-top: 9px;
    font-size: 14.5px;
    color: #5a9a6b;
}

.add-choice .icon {
    width: 14px;
    height: 14px;
    stroke-width: 1.6;
}

.field-type {
    display: flex;
    align-items: center;
    justify-content: space-between;
    margin-top: 21px;
    padding-top: 12px;
    border-top: 1px solid #f4f5f6;
}

.field-type-label {
    font-size: 12.5px;
    font-weight: 500;
    letter-spacing: 0.5px;
    color: #6b6e82;
}

.type-select {
    display: flex;
    align-items: center;
    width: 107px;
    height: 37px;
    padding: 0 6px 0 8px;
    background-color: #fff;
    border: 1px solid #eceef0;
    border-radius: 8px;
    font-size: 14.5px;
    color: #33354a;
}

.type-select span {
    margin-left: 4px;
}

.type-select .radio {
    width: 16px;
    height: 16px;
    stroke-width: 1.5;
}

.type-select .chev {
    width: 21px;
    height: 21px;
    margin-left: auto;
    color: #33354a;
    stroke-width: 1.6;
}

.ghost {
    display: flex;
    align-items: center;
    height: 52px;
    margin-top: 30px;
    padding: 0 13px;
    background-color: #f5faf6;
    border-radius: 10px;
    opacity: 0.75;
}

.ghost-icon {
    display: flex;
    align-items: center;
    justify-content: center;
    width: 31px;
    height: 31px;
    border-radius: 6px;
    background-color: #edf1ef;
    color: #9a9cac;
}

.ghost-icon .icon {
    width: 20px;
    height: 20px;
    stroke-width: 1.5;
}

.ghost-text {
    display: flex;
    flex-direction: column;
    margin-left: 14px;
}

.ghost-text strong {
    font-size: 15.5px;
    line-height: 18px;
    font-weight: 400;
    color: #8f919e;
}

.ghost-text span {
    font-size: 13px;
    line-height: 16px;
    color: #b7b9c4;
}

.ghost-add {
    width: 14px;
    height: 14px;
    margin-left: auto;
    color: #c5c7d6;
    stroke-width: 1.6;
}

.drag-chip {
    position: absolute;
    left: 382px;
    top: 360px;
    display: flex;
    align-items: center;
    gap: 8px;
    width: 151px;
    height: 50px;
    padding: 0 12px;
    background-color: #fff;
    border: 1px solid #8fb99b;
    border-radius: 10px;
    box-shadow: 0 6px 14px rgba(20, 30, 40, 0.14);
    font-size: 15.5px;
    font-weight: 500;
}

.drag-chip .icon {
    width: 24px;
    height: 24px;
    stroke-width: 1.5;
}

.add-field {
    display: flex;
    align-items: center;
    justify-content: center;
    gap: 8px;
    height: 39px;
    margin: 0 12px 12px;
    border: 1px dashed #8fb99b;
    border-radius: 8px;
    font-size: 15.5px;
    font-weight: 500;
    color: #5a9a6b;
}

.add-field .icon,
.add-section .icon {
    width: 21px;
    height: 21px;
    stroke-width: 1.6;
}

.add-section {
    display: flex;
    align-items: center;
    justify-content: center;
    gap: 8px;
    height: 37px;
    margin: 11px 29px 0 23px;
    border: 1px dashed #e2e4e8;
    border-radius: 8px;
    font-size: 15.5px;
    font-weight: 500;
    color: #33354a;
}

.section-drop {
    height: 120px;
    margin: 13px 12px 0;
    background-color: #edf5ef;
    border-top: 1px solid #dfe5e1;
    border-radius: 8px;
}

/* Properties panel */
.props {
    flex: none;
    width: 383px;
    padding-top: 1px;
    background-color: #fff;
    border-left: 1px solid #eff0f2;
}

.props-head {
    display: flex;
    height: 87px;
    padding: 18px 19px 0;
    border-bottom: 1px solid #f1f2f4;
}

.props-icon {
    display: flex;
    align-items: center;
    justify-content: center;
    width: 48px;
    height: 48px;
    border-radius: 8px;
    background-color: #eef5f0;
    color: #3f7f55;
}

.props-icon .icon {
    width: 22px;
    height: 22px;
    stroke-width: 1.4;
}

.props-title {
    display: flex;
    flex-direction: column;
    margin-left: 14px;
    padding-top: 1px;
}

.props-title strong {
    font-size: 17px;
    line-height: 20px;
    font-weight: 600;
}

.props-title span {
    margin-top: 9px;
    font-size: 14px;
    line-height: 18px;
    color: #6b6e82;
}

.props-tabs {
    display: flex;
    padding: 0 14px 9px;
    border-bottom: 1px solid #f1f2f4;
}

.props-tab {
    width: 118px;
    height: 48px;
    font-size: 14px;
    font-weight: 600;
    line-height: 46px;
    text-align: center;
    color: #6b6e82;
}

.props-tab.active {
    color: #3d6b4a;
    border-bottom: 3px solid #3d6b4a;
}

.props-form {
    padding: 18px 19px 0;
}

.props-form h3 {
    margin: 0;
    font-size: 13px;
    line-height: 16px;
    font-weight: 600;
    letter-spacing: 0.6px;
    color: #52556a;
}

.prop-label {
    display: flex;
    align-items: center;
    gap: 4px;
    height: 16px;
    margin: 10px 0 6px;
    font-size: 13.5px;
    color: #6b6e82;
}

.props-form h3 + .prop-label {
    margin-top: 16px;
}

.prop-label .icon,
.switch-row .icon {
    width: 14px;
    height: 14px;
    color: #a5a8bb;
    stroke-width: 1.4;
}

.prop-input {
    height: 49px;
    padding: 0 19px;
    border: 1px solid #eceef0;
    border-radius: 8px;
    font-size: 15.5px;
    line-height: 47px;
}

.prop-area {
    display: block;
    width: 344px;
    height: 119px;
    border: 1px solid #eceef0;
    border-radius: 8px;
    font-family: inherit;
    outline: none;
}

.switch-row {
    display: flex;
    align-items: center;
    gap: 4px;
    height: 28px;
    margin-top: 10px;
    font-size: 14.3px;
    color: #33354a;
}

.switch-row.first {
    margin-top: 11px;
}

.switch-row.other {
    margin-top: 15px;
}

.switch {
    position: relative;
    width: 52px;
    height: 28px;
    margin-right: 6px;
    border-radius: 14px;
    background-color: #f3f4f6;
}

.switch::after {
    content: "";
    position: absolute;
    left: 4px;
    top: 2px;
    width: 24px;
    height: 24px;
    border-radius: 50%;
    background-color: #fff;
}

.props-form hr {
    height: 1px;
    margin: 20px 0 19px;
    border: none;
    background-color: #f3f4f5;
}

.props-form hr.wide {
    margin: 26px 0 19px;
    background-color: #eceef0;
}

.option-row {
    display: flex;
    align-items: center;
    gap: 8px;
    margin-top: 8px;
}

.props-form h3 + .option-row {
    margin-top: 15px;
}

.option-row .prop-input {
    width: 148px;
}

.option-row .icon {
    width: 20px;
    height: 20px;
    margin-left: 6px;
    color: #df6152;
    stroke-width: 1.7;
}

.add-option {
    display: flex;
    align-items: center;
    gap: 7px;
    height: 20px;
    margin-top: 17px;
    font-size: 14.5px;
    color: #5a9a6b;
}

.add-option .icon {
    width: 20px;
    height: 20px;
    stroke-width: 1.6;
}
```
